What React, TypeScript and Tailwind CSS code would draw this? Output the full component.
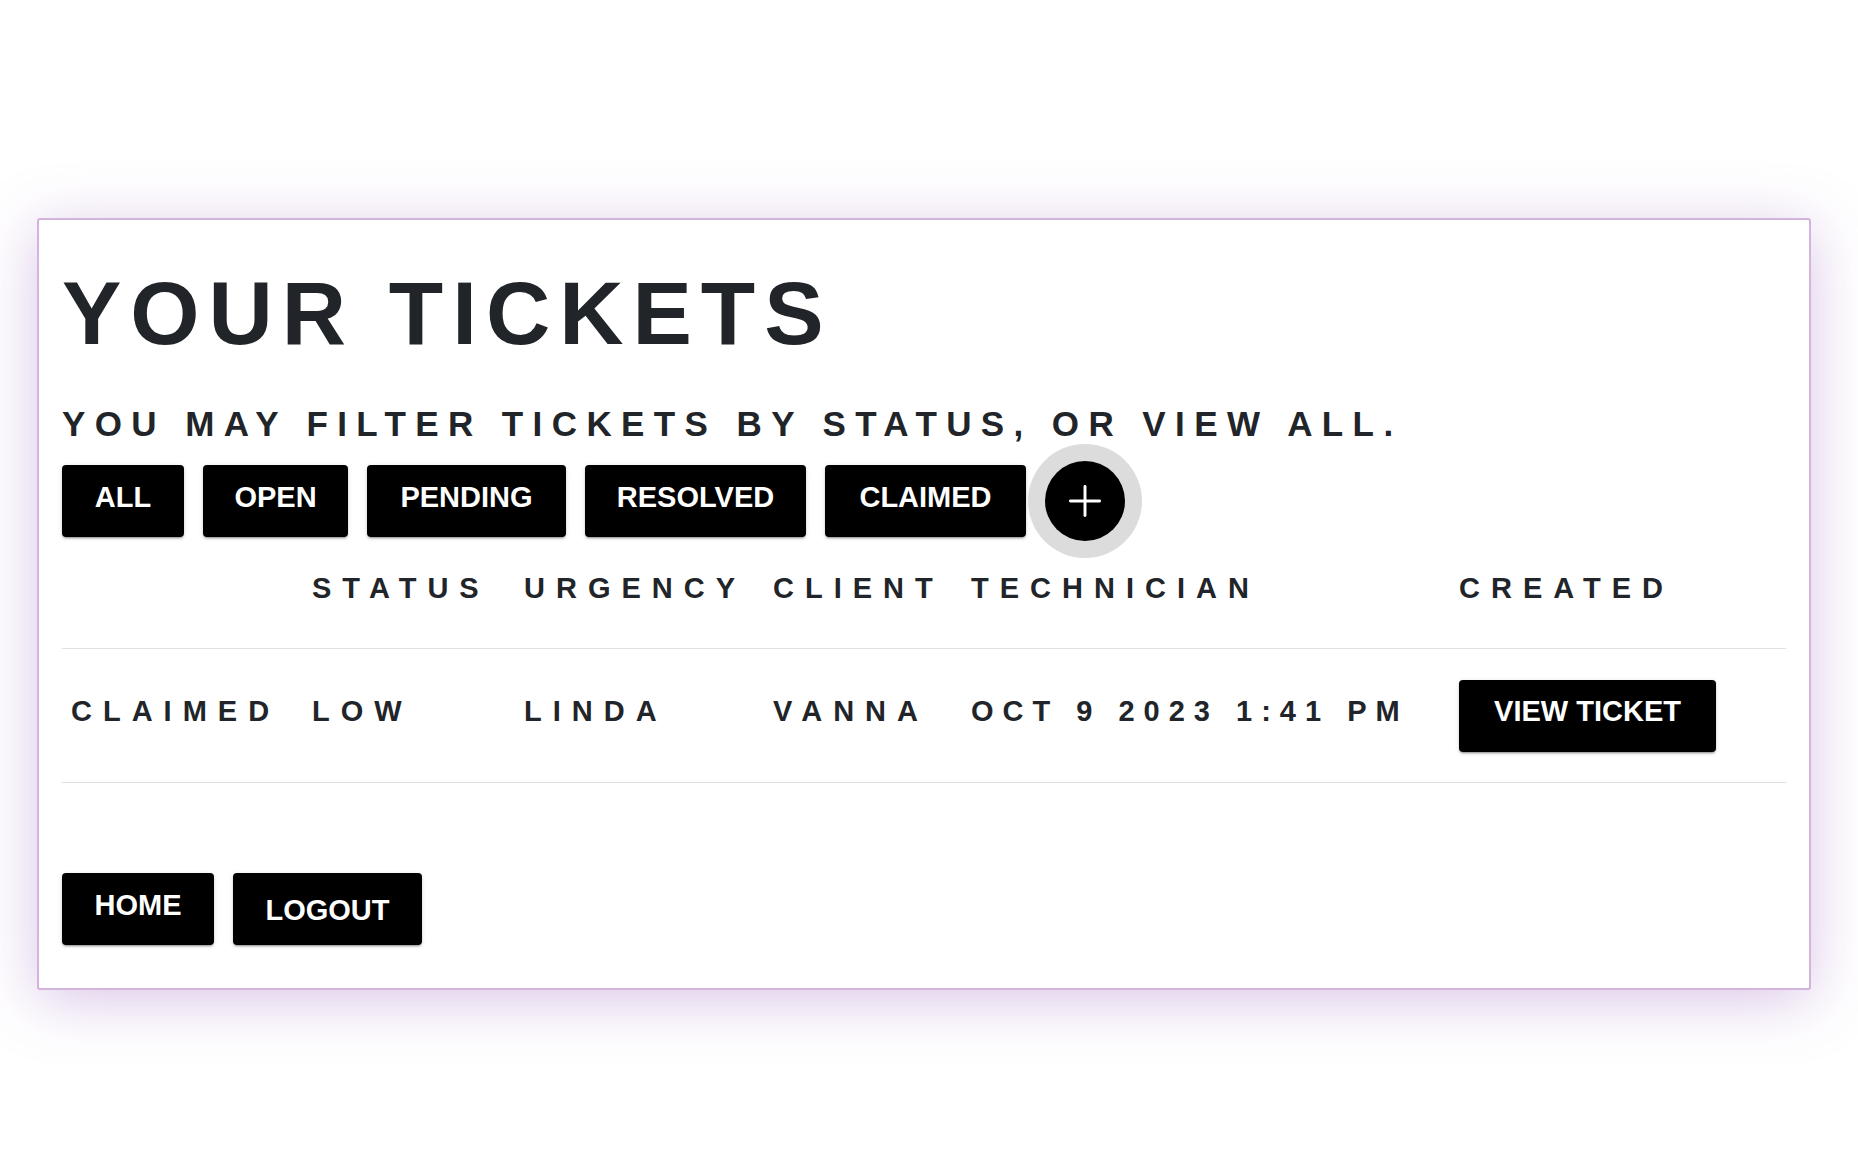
import { Plus } from "lucide-react";

const btn =
  "flex h-[72px] items-center justify-center rounded-[4px] bg-black text-[29px] leading-none font-bold text-white shadow-[0_3px_1px_-2px_rgba(0,0,0,0.2),0_2px_2px_0_rgba(0,0,0,0.14),0_1px_5px_0_rgba(0,0,0,0.12)]";

const cols = "grid grid-cols-[250px_212px_249px_198px_488px_1fr]";

const filters = [
  { label: "ALL", w: "w-[122px]" },
  { label: "OPEN", w: "w-[145px]" },
  { label: "PENDING", w: "w-[199px]" },
  { label: "RESOLVED", w: "w-[221px]" },
  { label: "CLAIMED", w: "w-[201px]" },
];

export default function App() {
  return (
    <div className="min-h-screen bg-white pt-[218px] font-['Liberation_Sans',Arial,sans-serif] text-[#212529]">
      <div className="ml-[37px] w-[1774px] rounded-[3px] border-2 border-[#d2b4dc] bg-white px-[23px] pt-[49px] pb-[43px] shadow-[0_10px_60px_rgba(150,90,185,0.35)]">
        <h1 className="text-[89px] leading-none font-bold tracking-[9px]">
          YOUR TICKETS
        </h1>
        <p className="mt-[48px] text-[35px] leading-none font-bold tracking-[9.4px]">
          YOU MAY FILTER TICKETS BY STATUS, OR VIEW ALL.
        </p>

        <div className="mt-[20px] flex items-center gap-[19px]">
          {filters.map((f) => (
            <button key={f.label} className={btn + " pb-2 " + f.w}>
              {f.label}
            </button>
          ))}
          <button className="flex h-20 w-20 items-center justify-center rounded-full bg-black text-white shadow-[0_0_0_17px_#dcdcdc,0_3px_6px_rgba(0,0,0,0.3)]">
            <Plus size={50} strokeWidth={1.4} />
          </button>
        </div>

        <div className={cols + " mt-[33px] border-b border-[#e0e0e0] pb-[45px] text-[29px] leading-none font-bold tracking-[11px]"}>
          <div />
          <div>STATUS</div>
          <div>URGENCY</div>
          <div>CLIENT</div>
          <div>TECHNICIAN</div>
          <div>CREATED</div>
        </div>

        <div className={cols + " h-[134px] items-center border-b border-[#e0e0e0] text-[29px] leading-none font-bold tracking-[11px]"}>
          <div className="pb-[9px] pl-[9px]">CLAIMED</div>
          <div className="pb-[9px]">LOW</div>
          <div className="pb-[9px]">LINDA</div>
          <div className="pb-[9px]">VANNA</div>
          <div className="pb-[9px] tracking-[9px]">OCT 9 2023 1:41 PM</div>
          <div>
            <button className={btn + " w-[257px] pb-2 tracking-normal"}>VIEW TICKET</button>
          </div>
        </div>

        <div className="mt-[90px] flex gap-[19px]">
          <button className={btn + " w-[152px] pb-2"}>HOME</button>
          <button className={btn + " w-[189px] pt-[2px]"}>LOGOUT</button>
        </div>
      </div>
    </div>
  );
}
